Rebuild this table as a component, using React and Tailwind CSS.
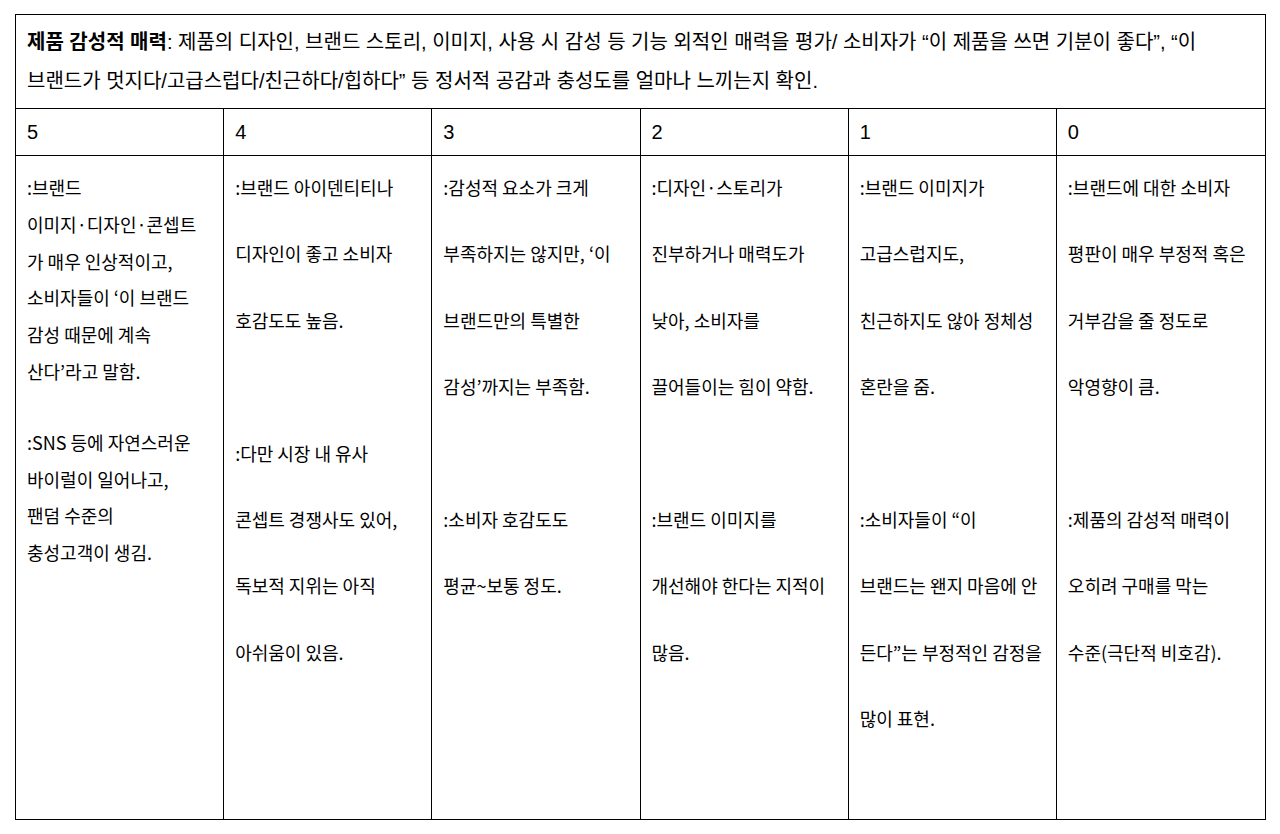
import React from "react";

const cols = [
  {
    n: "5",
    kind: "tight",
    paras: [
      [":브랜드", "이미지·디자인·콘셉트", "가 매우 인상적이고,", "소비자들이 ‘이 브랜드", "감성 때문에 계속", "산다’라고 말함."],
      [":SNS 등에 자연스러운", "바이럴이 일어나고,", "팬덤 수준의", "충성고객이 생김."],
    ],
  },
  {
    n: "4",
    lines: [":브랜드 아이덴티티나", "디자인이 좋고 소비자", "호감도도 높음.", "", ":다만 시장 내 유사", "콘셉트 경쟁사도 있어,", "독보적 지위는 아직", "아쉬움이 있음."],
  },
  {
    n: "3",
    lines: [":감성적 요소가 크게", "부족하지는 않지만, ‘이", "브랜드만의 특별한", "감성’까지는 부족함.", "", ":소비자 호감도도", "평균~보통 정도."],
  },
  {
    n: "2",
    lines: [":디자인·스토리가", "진부하거나 매력도가", "낮아, 소비자를", "끌어들이는 힘이 약함.", "", ":브랜드 이미지를", "개선해야 한다는 지적이", "많음."],
  },
  {
    n: "1",
    lines: [":브랜드 이미지가", "고급스럽지도,", "친근하지도 않아 정체성", "혼란을 줌.", "", ":소비자들이 “이", "브랜드는 왠지 마음에 안", "든다”는 부정적인 감정을", "많이 표현."],
  },
  {
    n: "0",
    lines: [":브랜드에 대한 소비자", "평판이 매우 부정적 혹은", "거부감을 줄 정도로", "악영향이 큼.", "", ":제품의 감성적 매력이", "오히려 구매를 막는", "수준(극단적 비호감)."],
  },
];

const headFont = { fontFamily: '"Liberation Sans", "Noto Sans CJK KR", sans-serif' };

export default function App() {
  return (
    <div className="w-[1280px] h-[834px] bg-white pt-[14px] pl-[15px] text-black">
      <div className="w-[1251px] border border-black" style={headFont}>
        <div className="h-[94px] border-b border-black px-[11px] pt-[8px] text-[20px] leading-[39px] whitespace-nowrap">
          <span className="font-bold">제품 감성적 매력</span>: 제품의 디자인, 브랜드 스토리, 이미지, 사용 시 감성 등 기능 외적인 매력을 평가/ 소비자가 “이 제품을 쓰면 기분이 좋다”, “이
          <br />
          브랜드가 멋지다/고급스럽다/친근하다/힙하다” 등 정서적 공감과 충성도를 얼마나 느끼는지 확인.
        </div>
        <div className="grid grid-cols-6 h-[47px] border-b border-black">
          {cols.map((c, i) => (
            <div
              key={c.n}
              className={`flex items-center px-[11px] text-[20px] ${i < 5 ? "border-r border-black" : ""}`}
            >
              {c.n}
            </div>
          ))}
        </div>
        <div
          className="grid grid-cols-6 h-[663px]"
          style={{ fontFamily: '"Noto Sans CJK KR", "Open Sans", sans-serif' }}
        >
          {cols.map((c, i) => (
            <div
              key={c.n}
              className={`px-[11px] pt-[13px] text-[18px] whitespace-nowrap ${i < 5 ? "border-r border-black" : ""}`}
            >
              {c.kind === "tight" ? (
                <div className="flex flex-col gap-[34px]">
                  {c.paras.map((p, j) => (
                    <div key={j} className="leading-[36.8px]">
                      {p.map((l, k) => (
                        <div key={k}>{l}</div>
                      ))}
                    </div>
                  ))}
                </div>
              ) : (
                c.lines.map((l, k) => (
                  <div key={k} className="h-[66.4px] leading-[36px]">
                    {l}
                  </div>
                ))
              )}
            </div>
          ))}
        </div>
      </div>
    </div>
  );
}
